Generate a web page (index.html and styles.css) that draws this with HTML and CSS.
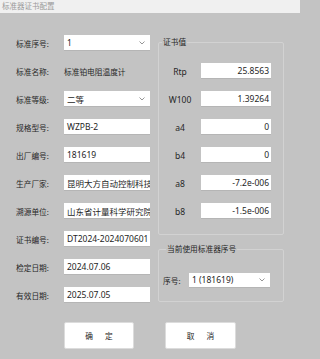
FILE: index.html
```html
<!DOCTYPE html>
<html>
<head>
<meta charset="utf-8">
<link rel="stylesheet" href="styles.css">
</head>
<body>
<div class="titlebar">标准器证书配置</div>
<div class="main">
  <div class="left">
    <div class="row"><span class="lbl">标准序号:</span><div class="ctl combo"><span>1</span><svg class="chev" width="6" height="4" viewBox="0 0 6 4"><polyline points="0.5,0.5 3,3 5.5,0.5" fill="none" stroke="#8a8a8a" stroke-width="0.9"/></svg></div></div>
    <div class="row"><span class="lbl">标准名称:</span><span class="plain">标准铂电阻温度计</span></div>
    <div class="row"><span class="lbl">标准等级:</span><div class="ctl combo"><span>二等</span><svg class="chev" width="6" height="4" viewBox="0 0 6 4"><polyline points="0.5,0.5 3,3 5.5,0.5" fill="none" stroke="#8a8a8a" stroke-width="0.9"/></svg></div></div>
    <div class="row"><span class="lbl">规格型号:</span><div class="ctl">WZPB-2</div></div>
    <div class="row"><span class="lbl">出厂编号:</span><div class="ctl">181619</div></div>
    <div class="row"><span class="lbl">生产厂家:</span><div class="ctl">昆明大方自动控制科技有限公司</div></div>
    <div class="row"><span class="lbl">溯源单位:</span><div class="ctl">山东省计量科学研究院</div></div>
    <div class="row"><span class="lbl">证书编号:</span><div class="ctl">DT2024-2024070601</div></div>
    <div class="row"><span class="lbl">检定日期:</span><div class="ctl">2024.07.06</div></div>
    <div class="row"><span class="lbl">有效日期:</span><div class="ctl">2025.07.05</div></div>
  </div>
  <div class="right">
    <fieldset class="group g1">
      <legend>证书值</legend>
      <div class="vrow"><span class="vlbl">Rtp</span><div class="ctl num">25.8563</div></div>
      <div class="vrow"><span class="vlbl">W100</span><div class="ctl num">1.39264</div></div>
      <div class="vrow"><span class="vlbl">a4</span><div class="ctl num">0</div></div>
      <div class="vrow"><span class="vlbl">b4</span><div class="ctl num">0</div></div>
      <div class="vrow"><span class="vlbl">a8</span><div class="ctl num">-7.2e-006</div></div>
      <div class="vrow"><span class="vlbl">b8</span><div class="ctl num">-1.5e-006</div></div>
    </fieldset>
    <fieldset class="group g2">
      <legend>当前使用标准器序号</legend>
      <div class="srow"><span class="slbl">序号:</span><div class="ctl combo scombo"><span>1 (181619)</span><svg class="chev" width="6" height="4" viewBox="0 0 6 4"><polyline points="0.5,0.5 3,3 5.5,0.5" fill="none" stroke="#8a8a8a" stroke-width="0.9"/></svg></div></div>
    </fieldset>
  </div>
</div>
<div class="buttons">
  <div class="btn b1"><span>确</span><span>定</span></div>
  <div class="btn b2"><span>取</span><span>消</span></div>
</div>
</body>
</html>
```
FILE: styles.css
```css
* { box-sizing: border-box; }
html, body { margin: 0; padding: 0; }
body {
  width: 300px;
  height: 359px;
  overflow: hidden;
  background: #c3c3c3;
  font-family: "Noto Sans", "Noto Sans CJK SC", sans-serif;
  color: #262626;
  font-size: 8px;
}
.titlebar {
  height: 13px;
  line-height: 13px;
  background: #f0f0f0;
  color: #9b9b9b;
  padding-left: 2px;
  font-size: 7.5px;
}
.main {
  display: flex;
  padding-top: 16px;
}
.left {
  width: 150px;
  padding-left: 16px;
}
.row {
  height: 28px;
  display: flex;
  align-items: center;
}
.lbl {
  width: 48px;
  font-size: 7.7px;
  white-space: nowrap;
}
.plain {
  font-size: 7.7px;
  white-space: nowrap;
}
.ctl {
  width: 86px;
  height: 16px;
  background: #ffffff;
  border-bottom: 1px solid #b5b5b5;
  display: flex;
  align-items: center;
  padding: 0 3px;
  font-size: 8.5px;
  white-space: nowrap;
  overflow: hidden;
  color: #1e1e1e;
}
.combo {
  justify-content: space-between;
  padding-right: 5px;
}
.chev { flex: none; }
.right {
  width: 126px;
  margin-left: 8px;
}
.group {
  margin: 0;
  border: 1px solid #d2d2d2;
  border-radius: 2px;
  min-width: 0;
}
.group legend {
  font-size: 7.7px;
  line-height: 10px;
  padding: 0 1px;
  margin-left: 3px;
  color: #262626;
}
.g1 {
  margin-top: 8px;
  padding: 10px 0 9px 0;
}
.vrow {
  height: 28px;
  display: flex;
  align-items: center;
}
.vlbl {
  width: 42px;
  text-align: center;
  font-size: 8.5px;
}
.num {
  width: 70px;
  justify-content: flex-end;
  padding-right: 2px;
}
.g2 {
  margin-top: 9px;
  padding: 12px 0 7px 4px;
}
.srow {
  height: 28px;
  display: flex;
  align-items: center;
}
.slbl {
  width: 26px;
  font-size: 7.7px;
}
.scombo {
  width: 81px;
  height: 15px;
}
.buttons {
  display: flex;
  padding-left: 64px;
  margin-top: 13px;
  gap: 31px;
}
.btn {
  width: 70px;
  height: 27px;
  background: #ffffff;
  border: 1px solid #dcdcdc;
  border-radius: 2px;
  display: flex;
  align-items: center;
  justify-content: center;
  gap: 12px;
  font-size: 7.7px;
  color: #262626;
}
.b2 { width: 71px; }
```
